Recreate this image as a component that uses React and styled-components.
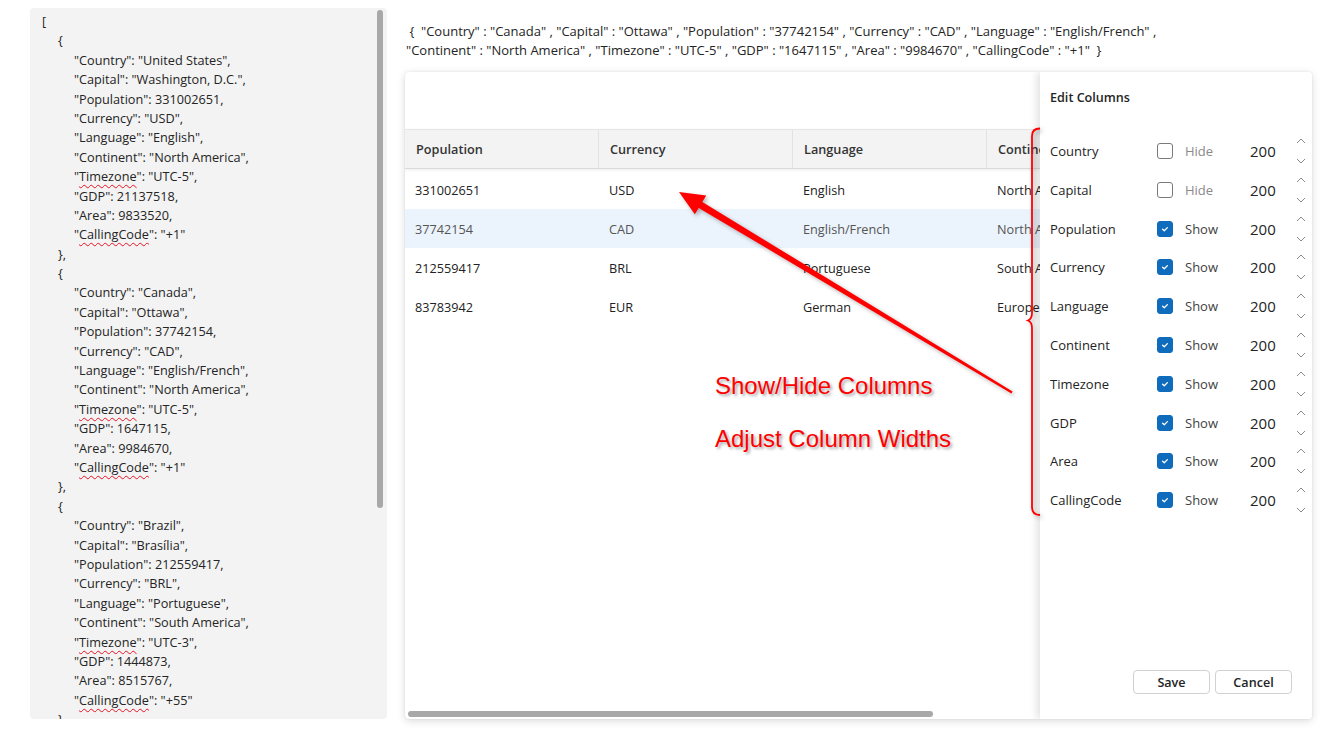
import React from "react";
import styled, { createGlobalStyle } from "styled-components";

const countries = [
  {
    Country: "United States",
    Capital: "Washington, D.C.",
    Population: 331002651,
    Currency: "USD",
    Language: "English",
    Continent: "North America",
    Timezone: "UTC-5",
    GDP: 21137518,
    Area: 9833520,
    CallingCode: "+1",
  },
  {
    Country: "Canada",
    Capital: "Ottawa",
    Population: 37742154,
    Currency: "CAD",
    Language: "English/French",
    Continent: "North America",
    Timezone: "UTC-5",
    GDP: 1647115,
    Area: 9984670,
    CallingCode: "+1",
  },
  {
    Country: "Brazil",
    Capital: "Brasília",
    Population: 212559417,
    Currency: "BRL",
    Language: "Portuguese",
    Continent: "South America",
    Timezone: "UTC-3",
    GDP: 1444873,
    Area: 8515767,
    CallingCode: "+55",
  },
  {
    Country: "Germany",
    Capital: "Berlin",
    Population: 83783942,
    Currency: "EUR",
    Language: "German",
    Continent: "Europe",
    Timezone: "UTC+1",
    GDP: 3845630,
    Area: 357022,
    CallingCode: "+49",
  },
];

const keys = Object.keys(countries[0]);
const misspelled = ["Timezone", "CallingCode"];
const gridColumns = ["Population", "Currency", "Language", "Continent"];
const hidden = ["Country", "Capital"];

const GlobalStyle = createGlobalStyle`
  html, body {
    margin: 0;
    padding: 0;
    background: #ffffff;
  }
  body {
    font-family: "Open Sans", "Noto Sans", sans-serif;
    color: #242424;
  }
`;

const Page = styled.div`
  position: relative;
  width: 1322px;
  height: 741px;
  box-sizing: border-box;
  padding: 8px 10px 0 30px;
  display: flex;
  gap: 18px;
  overflow: hidden;
`;

const SourcePanel = styled.div`
  width: 357px;
  height: 711px;
  flex-shrink: 0;
  display: flex;
  background: #f3f3f3;
  border-radius: 4px;
  overflow: hidden;
`;

const SourceText = styled.div`
  flex: 1;
  padding: 4px 0 0 12px;
  font-size: 12.7px;
  color: #242424;
  white-space: pre;
`;

const SourceLine = styled.div`
  height: 19.4px;
  line-height: 19.4px;
  padding-left: ${(p) => p.$depth * 16}px;
`;

const Misspelled = styled.span`
  text-decoration: underline wavy #e81123;
  text-decoration-skip-ink: none;
  text-underline-offset: 3px;
  text-decoration-thickness: 1px;
`;

const VTrack = styled.div`
  width: 6px;
  padding: 2px 4px 0 0;
`;

const VThumb = styled.div`
  height: 498px;
  border-radius: 3px;
  background: #a8a8a8;
`;

const MainColumn = styled.div`
  flex: 1;
  min-width: 0;
  display: flex;
  flex-direction: column;
`;

const RecordText = styled.div`
  height: 51px;
  padding: 14px 0 0 1px;
  box-sizing: border-box;
  margin-bottom: 13px;
  font-size: 13px;
  line-height: 19px;
  color: #242424;
  white-space: pre;
`;

const Card = styled.div`
  height: 647px;
  display: flex;
  background: #ffffff;
  border-radius: 4px;
  box-shadow: 0 2px 8px rgba(0, 0, 0, 0.14), 0 0 2px rgba(0, 0, 0, 0.1);
  overflow: hidden;
`;

const GridView = styled.div`
  flex: 1;
  min-width: 0;
  display: flex;
  flex-direction: column;
  overflow: hidden;
`;

const Toolbar = styled.div`
  height: 57px;
  flex-shrink: 0;
`;

const HeaderRow = styled.div`
  display: flex;
  height: 38px;
  background: #f3f3f3;
  border-top: 1px solid #e6e6e6;
  border-bottom: 1px solid #dadada;
  box-shadow: 0 1px 3px rgba(0, 0, 0, 0.08);
  position: relative;
`;

const HeaderCell = styled.div`
  width: 194px;
  flex-shrink: 0;
  box-sizing: border-box;
  padding-left: 11px;
  display: flex;
  align-items: center;
  border-right: 1px solid #e2e2e2;
  font-size: 12.7px;
  font-weight: 600;
  color: #333333;
  white-space: nowrap;
`;

const Row = styled.div`
  display: flex;
  height: 39px;
  background: ${(p) => (p.$active ? "#ebf3fc" : "#ffffff")};
  color: ${(p) => (p.$active ? "#555555" : "#222222")};
`;

const Cell = styled.div`
  width: 194px;
  flex-shrink: 0;
  box-sizing: border-box;
  padding-left: 10px;
  display: flex;
  align-items: center;
  font-size: 12.7px;
  white-space: nowrap;
`;

const Rows = styled.div`
  flex: 1;
  overflow: hidden;
  padding-top: 1px;
`;

const HTrack = styled.div`
  height: 6px;
  padding: 0 0 2px 3px;
`;

const HThumb = styled.div`
  width: 525px;
  height: 6px;
  border-radius: 3px;
  background: #a8a8a8;
`;

const EditPanel = styled.aside`
  width: 272px;
  flex-shrink: 0;
  box-sizing: border-box;
  padding: 17px 6px 25px 10px;
  display: flex;
  flex-direction: column;
  background: #ffffff;
  box-shadow: -3px 0 8px rgba(0, 0, 0, 0.12);
  z-index: 1;
`;

const PanelTitle = styled.div`
  font-size: 12.6px;
  font-weight: 600;
  line-height: 18px;
  color: #242424;
  margin-bottom: 24.6px;
`;

const ColumnRow = styled.div`
  height: 38.8px;
  display: flex;
  align-items: center;
`;

const ColumnName = styled.div`
  width: 107px;
  font-size: 13px;
  color: #242424;
`;

const Box = styled.div`
  width: 16px;
  height: 16px;
  box-sizing: border-box;
  border-radius: 3px;
  display: flex;
  align-items: center;
  justify-content: center;
  background: ${(p) => (p.$checked ? "#0f6cbd" : "#ffffff")};
  border: 1px solid ${(p) => (p.$checked ? "#0f6cbd" : "#7a7a7a")};
`;

const StateLabel = styled.div`
  width: 65px;
  padding-left: 12px;
  font-size: 13px;
  color: ${(p) => (p.$checked ? "#424242" : "#8a8a8a")};
`;

const WidthValue = styled.div`
  width: 46px;
  font-size: 15px;
  color: #242424;
`;

const Spinner = styled.div`
  height: 26px;
  display: flex;
  flex-direction: column;
  justify-content: space-between;
`;

const Footer = styled.div`
  margin-top: auto;
  display: flex;
  justify-content: flex-end;
  gap: 5px;
  padding-right: 14px;
`;

const Button = styled.button`
  width: 77px;
  height: 24px;
  box-sizing: border-box;
  border: 1px solid #d1d1d1;
  border-radius: 4px;
  background: #ffffff;
  font-family: "Open Sans", "Noto Sans", sans-serif;
  font-size: 12.6px;
  font-weight: 600;
  color: #242424;
  padding: 0;
`;

const Overlay = styled.div`
  position: absolute;
  inset: 0;
  pointer-events: none;
  z-index: 5;
`;

const Note = styled.div`
  position: absolute;
  left: 715px;
  top: ${(p) => p.$top}px;
  font-family: "Liberation Sans", Arial, sans-serif;
  font-size: 24px;
  line-height: 28px;
  color: #ff0000;
  text-shadow: 2px 2px 3px rgba(0, 0, 0, 0.35);
  white-space: nowrap;
`;

const Chevron = ({ up }) => (
  <svg width="10" height="6" viewBox="0 0 10 6">
    <polyline
      points={up ? "1,5 5,1 9,5" : "1,1 5,5 9,1"}
      fill="none"
      stroke="#8a8a8a"
      strokeWidth="1"
    />
  </svg>
);

const Check = ({ checked }) => (
  <Box $checked={checked}>
    {checked && (
      <svg width="10" height="10" viewBox="0 0 10 10">
        <path
          d="M2.6 5.2 L4.3 6.8 L7.4 3.6"
          fill="none"
          stroke="#ffffff"
          strokeWidth="1.3"
          strokeLinecap="round"
          strokeLinejoin="round"
        />
      </svg>
    )}
  </Box>
);

const fmt = (v) => (typeof v === "number" ? String(v) : `"${v}"`);

const SourceView = () => (
  <SourcePanel>
    <SourceText>
      <SourceLine $depth={0}>[</SourceLine>
      {countries.map((c, i) => (
        <React.Fragment key={c.Country}>
          <SourceLine $depth={1}>{"{"}</SourceLine>
          {keys.map((k, j) => (
            <SourceLine key={k} $depth={2}>
              "{misspelled.includes(k) ? <Misspelled>{k}</Misspelled> : k}":{" "}
              {fmt(c[k])}
              {j < keys.length - 1 ? "," : ""}
            </SourceLine>
          ))}
          <SourceLine $depth={1}>{i < countries.length - 1 ? "}," : "}"}</SourceLine>
        </React.Fragment>
      ))}
      <SourceLine $depth={0}>]</SourceLine>
    </SourceText>
    <VTrack>
      <VThumb />
    </VTrack>
  </SourcePanel>
);

const recordPairs = keys.map((k) => `"${k}" : "${countries[1][k]}"`);
const recordLine1 = " {  " + recordPairs.slice(0, 5).join(" , ") + " ,";
const recordLine2 = recordPairs.slice(5).join(" , ") + "  }";

const Annotations = () => (
  <Overlay>
    <svg
      width="1322"
      height="741"
      viewBox="0 0 1322 741"
      style={{ filter: "drop-shadow(2px 2px 2px rgba(0,0,0,0.3))" }}
    >
      <polygon
        points="679,192 706.2,195.5 702.3,201.9 1012.6,391.6 1011.4,393.4 698.7,207.9 694.8,214.3"
        fill="#ff0000"
      />
      <path
        d="M1040 128.5 Q1032 128.5 1032 136 L1032 313 Q1032 319 1028 320.5 Q1032 322 1032 328 L1032 507 Q1032 515 1040 515"
        fill="none"
        stroke="#ff0000"
        strokeWidth="1.8"
      />
    </svg>
    <Note $top={372}>Show/Hide Columns</Note>
    <Note $top={425}>Adjust Column Widths</Note>
  </Overlay>
);

export default function App() {
  return (
    <>
      <GlobalStyle />
      <Page>
        <SourceView />
        <MainColumn>
          <RecordText>
            {recordLine1}
            {"\n"}
            {recordLine2}
          </RecordText>
          <Card>
            <GridView>
              <Toolbar />
              <HeaderRow>
                {gridColumns.map((col) => (
                  <HeaderCell key={col}>{col}</HeaderCell>
                ))}
              </HeaderRow>
              <Rows>
                {countries.map((c, i) => (
                  <Row key={c.Country} $active={i === 1}>
                    {gridColumns.map((col) => (
                      <Cell key={col}>{c[col]}</Cell>
                    ))}
                  </Row>
                ))}
              </Rows>
              <HTrack>
                <HThumb />
              </HTrack>
            </GridView>
            <EditPanel>
              <PanelTitle>Edit Columns</PanelTitle>
              {keys.map((k) => {
                const checked = !hidden.includes(k);
                return (
                  <ColumnRow key={k}>
                    <ColumnName>{k}</ColumnName>
                    <Check checked={checked} />
                    <StateLabel $checked={checked}>{checked ? "Show" : "Hide"}</StateLabel>
                    <WidthValue>200</WidthValue>
                    <Spinner>
                      <Chevron up />
                      <Chevron />
                    </Spinner>
                  </ColumnRow>
                );
              })}
              <Footer>
                <Button>Save</Button>
                <Button>Cancel</Button>
              </Footer>
            </EditPanel>
          </Card>
        </MainColumn>
        <Annotations />
      </Page>
    </>
  );
}
